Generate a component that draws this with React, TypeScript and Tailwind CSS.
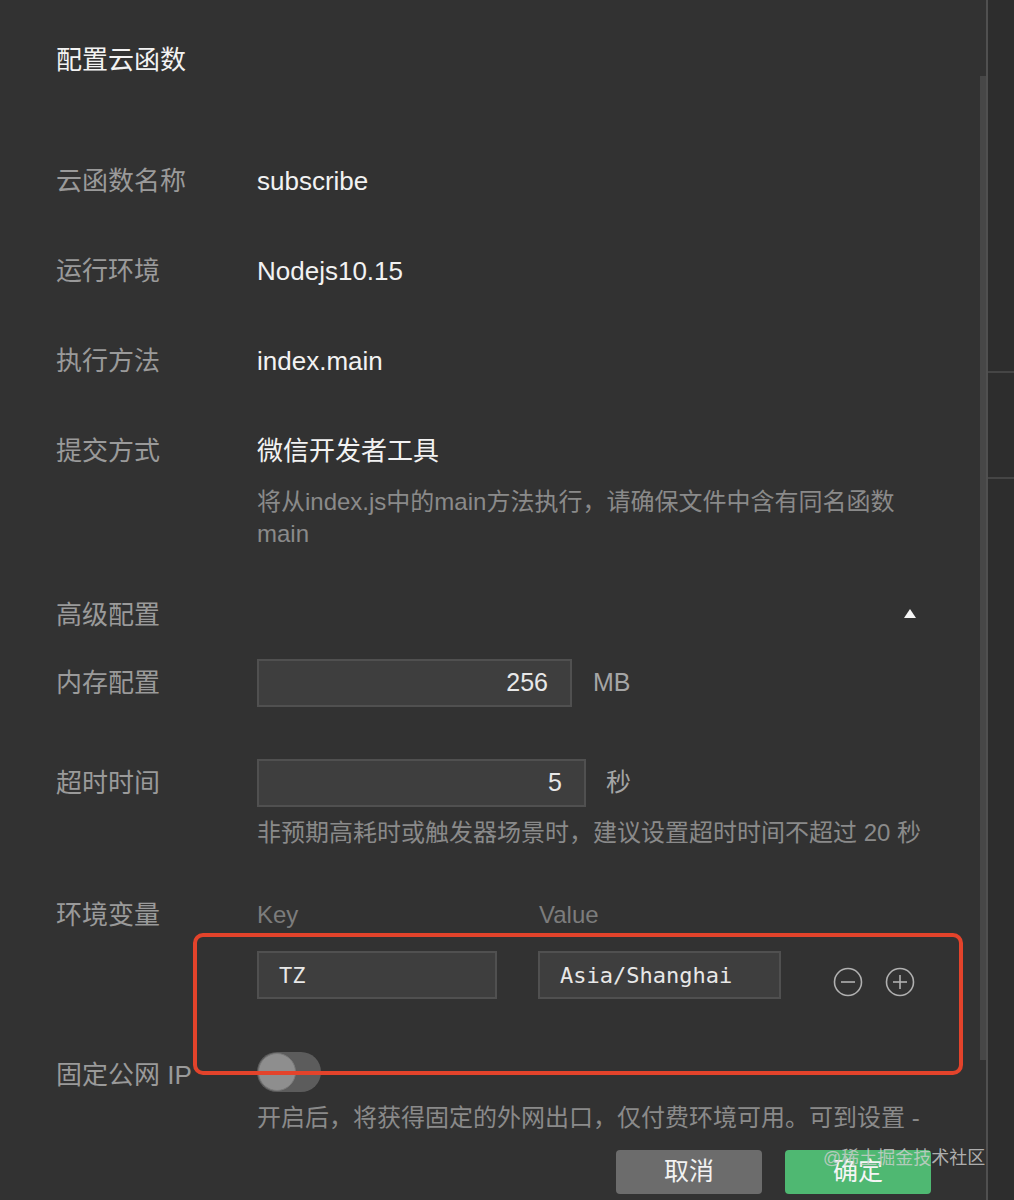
import { useState } from 'react';

const sans = { fontFamily: '"Liberation Sans", "Noto Sans CJK SC", sans-serif' };
const mono = { fontFamily: '"DejaVu Sans Mono", "Liberation Mono", monospace' };

function Label({ children }: { children: React.ReactNode }) {
   return <div className="w-[201px] shrink-0 text-[26px] text-[#9a9a9a]">{children}</div>;
}

function CircleIcon({ plus }: { plus?: boolean }) {
   return (
      <svg width="30" height="30" viewBox="0 0 30 30" fill="none" stroke="#b0b0b0" strokeWidth="1.6">
         <circle cx="15" cy="15" r="13.5" />
         <line x1="8" y1="15" x2="22" y2="15" />
         {plus && <line x1="15" y1="8" x2="15" y2="22" />}
      </svg>
   );
}

export default function App() {
   const [fixedIp, setFixedIp] = useState(false);

   return (
      <div className="relative flex h-[1200px] w-[1014px] overflow-hidden bg-[#323232]" style={sans}>
         {/* dialog body */}
         <div className="relative w-[986px] shrink-0 pl-[56px]">
            <div className="flex h-[120px] items-center text-[26px] text-[#f2f2f2]">配置云函数</div>

            <div className="pt-[16px]">
               <div className="flex h-[90px] items-center">
                  <Label>云函数名称</Label>
                  <div className="text-[26px] text-[#f2f2f2]">subscribe</div>
               </div>
               <div className="flex h-[90px] items-center">
                  <Label>运行环境</Label>
                  <div className="text-[26px] text-[#f2f2f2]">Nodejs10.15</div>
               </div>
               <div className="flex h-[90px] items-center">
                  <Label>执行方法</Label>
                  <div className="text-[26px] text-[#f2f2f2]">index.main</div>
               </div>
               <div className="flex">
                  <Label>
                     <div className="flex h-[90px] items-center">提交方式</div>
                  </Label>
                  <div>
                     <div className="flex h-[90px] items-center text-[26px] text-[#f2f2f2]">微信开发者工具</div>
                     <div className="-mt-[10px] w-[660px] text-[24px] leading-[32px] text-[#8a8a8a]">
                        将从index.js中的main方法执行，请确保文件中含有同名函数main
                     </div>
                  </div>
               </div>
            </div>

            {/* advanced */}
            <div className="mt-[35px] flex h-[60px] w-[860px] items-center justify-between">
               <Label>高级配置</Label>
               <svg width="12" height="9" viewBox="0 0 12 9" className="-mt-[4px]">
                  <polygon points="6,0 12,9 0,9" fill="#f5f5f5" />
               </svg>
            </div>

            <div className="mt-[14px] flex h-[48px] items-center">
               <Label>内存配置</Label>
               <div className="flex h-[48px] w-[315px] items-center justify-end border-2 border-[#505050] bg-[#3e3e3e] pr-[22px] text-[25px] text-[#e8e8e8]">
                  256
               </div>
               <div className="ml-[21px] text-[25px] text-[#a5a5a5]">MB</div>
            </div>

            <div className="mt-[52px] flex">
               <Label>
                  <div className="flex h-[48px] items-center">超时时间</div>
               </Label>
               <div>
                  <div className="flex items-center">
                     <div className="flex h-[48px] w-[329px] items-center justify-end border-2 border-[#505050] bg-[#3e3e3e] pr-[22px] text-[25px] text-[#e8e8e8]">
                        5
                     </div>
                     <div className="ml-[20px] text-[25px] text-[#a5a5a5]">秒</div>
                  </div>
                  <div className="mt-[10px] text-[24px] leading-[32px] text-[#8a8a8a]">
                     非预期高耗时或触发器场景时，建议设置超时时间不超过 20 秒
                  </div>
               </div>
            </div>

            {/* env vars */}
            <div className="mt-[50px] flex">
               <Label>
                  <div className="flex h-[32px] items-center">环境变量</div>
               </Label>
               <div>
                  <div className="flex h-[32px] items-center text-[24px] text-[#7c7c7c]">
                     <div className="w-[282px]">Key</div>
                     <div>Value</div>
                  </div>
                  <div className="mt-[20px] flex items-center">
                     <div
                        className="flex h-[48px] w-[240px] items-center border-2 border-[#505050] bg-[#3e3e3e] pl-[20px] text-[22px] text-[#e8e8e8]"
                        style={mono}
                     >
                        TZ
                     </div>
                     <div
                        className="ml-[41px] flex h-[48px] w-[243px] items-center border-2 border-[#505050] bg-[#3e3e3e] pl-[20px] text-[22px] text-[#e8e8e8]"
                        style={mono}
                     >
                        Asia/Shanghai
                     </div>
                     <div className="ml-[52px] mt-[14px] flex items-center gap-[22px]">
                        <CircleIcon />
                        <CircleIcon plus />
                     </div>
                  </div>
               </div>
            </div>

            {/* fixed ip */}
            <div className="mt-[53px] flex">
               <Label>
                  <div className="flex h-[40px] items-center pt-[6px]">固定公网 IP</div>
               </Label>
               <div>
                  <button
                     onClick={() => setFixedIp(!fixedIp)}
                     className="relative block h-[40px] w-[64px] rounded-full bg-[#5c5c5c]"
                  >
                     <span
                        className={
                           fixedIp
                              ? 'absolute left-[25px] top-[1px] h-[38px] w-[38px] rounded-full border border-[#7a7a7a] bg-[#8e8e8e]'
                              : 'absolute left-[1px] top-[1px] h-[38px] w-[38px] rounded-full border border-[#7a7a7a] bg-[#8e8e8e]'
                        }
                     />
                  </button>
                  <div className="mt-[10px] text-[24px] leading-[32px] text-[#8a8a8a]">
                     开启后，将获得固定的外网出口，仅付费环境可用。可到设置 -
                  </div>
               </div>
            </div>

            {/* footer */}
            <div className="mt-[16px] flex w-[875px] justify-end gap-[23px]">
               <button className="h-[44px] w-[146px] rounded-[4px] bg-[#6c6c6c] text-[25px] text-[#f2f2f2]">取消</button>
               <button className="h-[44px] w-[146px] rounded-[4px] bg-[#4fb872] text-[25px] text-[#f5f5f5]">确定</button>
            </div>

            {/* scrollbar thumb */}
            <div className="absolute right-0 top-[76px] h-[984px] w-[6px] bg-[#474747]" />
         </div>

         <div className="w-[2px] shrink-0 bg-[#505050]" />

         {/* side strip */}
         <div className="flex-1 bg-[#2d2d2d]">
            <div className="mt-[371px] h-[2px] bg-[#454545]" />
            <div className="mt-[104px] h-[2px] bg-[#454545]" />
         </div>

         {/* annotation */}
         <div className="pointer-events-none absolute left-[193px] top-[933px] h-[142px] w-[770px] rounded-[10px] border-[4px] border-[#e3432b]" />

         {/* watermark */}
         <div className="pointer-events-none absolute left-[823px] top-[1145px] text-[18px] text-[#d0d0d0]/80">
            @稀土掘金技术社区
         </div>
      </div>
   );
}
